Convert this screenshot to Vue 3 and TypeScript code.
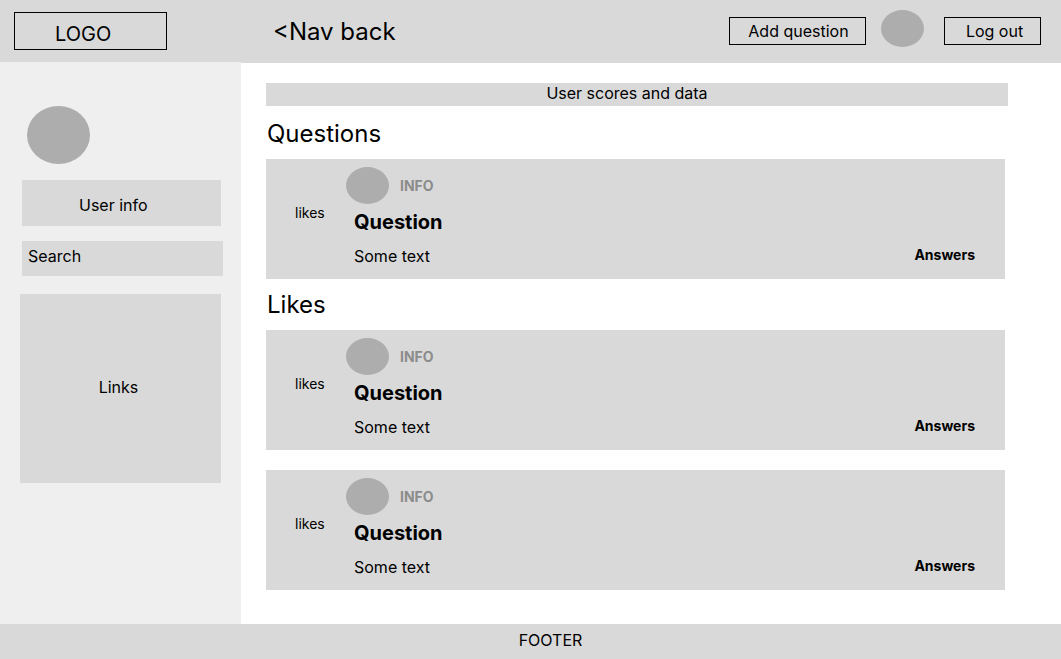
<script setup lang="ts">
interface Entry {
  id: number
  info: string
  title: string
  text: string
}

interface Section {
  title: string
  entries: Entry[]
}

const entry = (id: number): Entry => ({ id, info: 'INFO', title: 'Question', text: 'Some text' })

const sections: Section[] = [
  { title: 'Questions', entries: [entry(1)] },
  { title: 'Likes', entries: [entry(2), entry(3)] },
]
</script>

<template>
  <div class="page">
    <header class="header">
      <a class="logo" href="#">LOGO</a>
      <a class="back" href="#">&lt;Nav back</a>
      <div class="actions">
        <button class="button add" type="button">Add question</button>
        <span class="avatar"></span>
        <button class="button logout" type="button">Log out</button>
      </div>
    </header>

    <div class="body">
      <aside class="sidebar">
        <div class="profile">
          <div class="avatar avatar-large"></div>
          <div class="user-info">User info</div>
          <input class="search" type="search" placeholder="Search" aria-label="Search" />
        </div>
        <nav class="links"><a href="#">Links</a></nav>
      </aside>

      <main class="main">
        <div class="scores">User scores and data</div>
        <section v-for="section in sections" :key="section.title" class="section">
          <h2 class="heading">{{ section.title }}</h2>
          <div class="list">
            <article v-for="item in section.entries" :key="item.id" class="card">
              <button class="likes" type="button">likes</button>
              <div class="content">
                <div class="author">
                  <span class="avatar"></span>
                  <span class="info">{{ item.info }}</span>
                </div>
                <h3 class="title">{{ item.title }}</h3>
                <p class="text">{{ item.text }}</p>
              </div>
              <a class="answers" href="#">Answers</a>
            </article>
          </div>
        </section>
      </main>
    </div>

    <footer class="footer">FOOTER</footer>
  </div>
</template>

<style>
body {
  margin: 0;
}
</style>

<style scoped>
.page {
  display: flex;
  flex-direction: column;
  min-height: 100vh;
  background: #fff;
  color: #000;
  font-family: Inter, "Liberation Sans", sans-serif;
  font-size: 16px;
  line-height: 20px;
}

.page * {
  box-sizing: border-box;
}

a {
  color: inherit;
  text-decoration: none;
}

button,
input {
  margin: 0;
  padding: 0;
  border: 0;
  border-radius: 0;
  background: none;
  color: inherit;
  font: inherit;
}

button {
  cursor: pointer;
}

.avatar {
  display: block;
  flex: none;
  width: 43px;
  height: 37px;
  border-radius: 50%;
  background: #adadad;
}

.header {
  display: flex;
  align-items: center;
  height: 62px;
  padding: 0 20px 0 14px;
  background: #d9d9d9;
}

.logo {
  width: 153px;
  height: 38px;
  padding: 9px 0 0 40px;
  border: 1px solid #000;
  font-size: 20px;
  line-height: 24px;
}

.back {
  margin-left: 106px;
  font-size: 24px;
  line-height: 29px;
}

.actions {
  display: flex;
  align-items: flex-start;
  align-self: flex-start;
  margin-left: auto;
  padding-top: 10px;
}

.button {
  height: 28px;
  margin-top: 7px;
  border: 1px solid #000;
  white-space: nowrap;
}

.add {
  width: 137px;
  margin-right: 15px;
  padding-left: 2px;
}

.logout {
  width: 97px;
  margin-left: 20px;
  padding-left: 4px;
}

.body {
  display: flex;
  flex: 1;
}

.sidebar {
  flex: none;
  width: 241px;
  padding: 44px 18px 20px 20px;
  background: #efefef;
}

.profile {
  padding-left: 2px;
}

.avatar-large {
  width: 63px;
  height: 58px;
  margin-left: 5px;
}

.user-info {
  height: 46px;
  margin: 16px 2px 15px 0;
  padding: 15px 0 0 57px;
  background: #d9d9d9;
}

.search {
  display: block;
  width: 100%;
  height: 35px;
  padding: 0 6px 6px;
  outline: 0;
  background: #d9d9d9;
  appearance: none;
}

.search::placeholder {
  color: #000;
  opacity: 1;
}

.links {
  display: flex;
  align-items: center;
  justify-content: center;
  height: 189px;
  margin: 18px 2px 0 0;
  padding: 0 4px 4px 0;
  background: #d9d9d9;
}

.main {
  flex: 1;
  min-width: 0;
  padding: 20px 53px 34px 25px;
  border-top: 1px solid #d9d9d9;
}

.scores {
  margin-bottom: 2px;
  padding: 0 20px 3px 0;
  background: #d9d9d9;
  text-align: center;
}

.section {
  padding-right: 3px;
}

.heading {
  margin: 0;
  padding: 11px 0 11px 1px;
  font-size: 24px;
  font-weight: 400;
  line-height: 29px;
}

.list {
  display: grid;
  gap: 20px;
}

.card {
  display: flex;
  align-items: flex-start;
  padding: 8px 30px 13px 29px;
  background: #d9d9d9;
}

.likes {
  flex: none;
  width: 51px;
  margin-top: 38px;
  font-size: 14px;
  line-height: 16px;
  text-align: left;
}

.content {
  flex: 1;
  min-width: 0;
}

.author {
  display: flex;
  align-items: center;
  gap: 11px;
}

.info {
  color: #8c8c8c;
  font-size: 14px;
  font-weight: 700;
  line-height: 18px;
}

.title {
  margin: 6px 0 12px;
  padding-left: 8px;
  font-size: 20px;
  font-weight: 700;
  line-height: 24px;
}

.text {
  margin: 0;
  padding-left: 8px;
}

.answers {
  align-self: flex-end;
  font-size: 14px;
  font-weight: 700;
  line-height: 22px;
}

.footer {
  height: 35px;
  padding: 6px 0 0 40px;
  background: #d9d9d9;
  text-align: center;
}
</style>
